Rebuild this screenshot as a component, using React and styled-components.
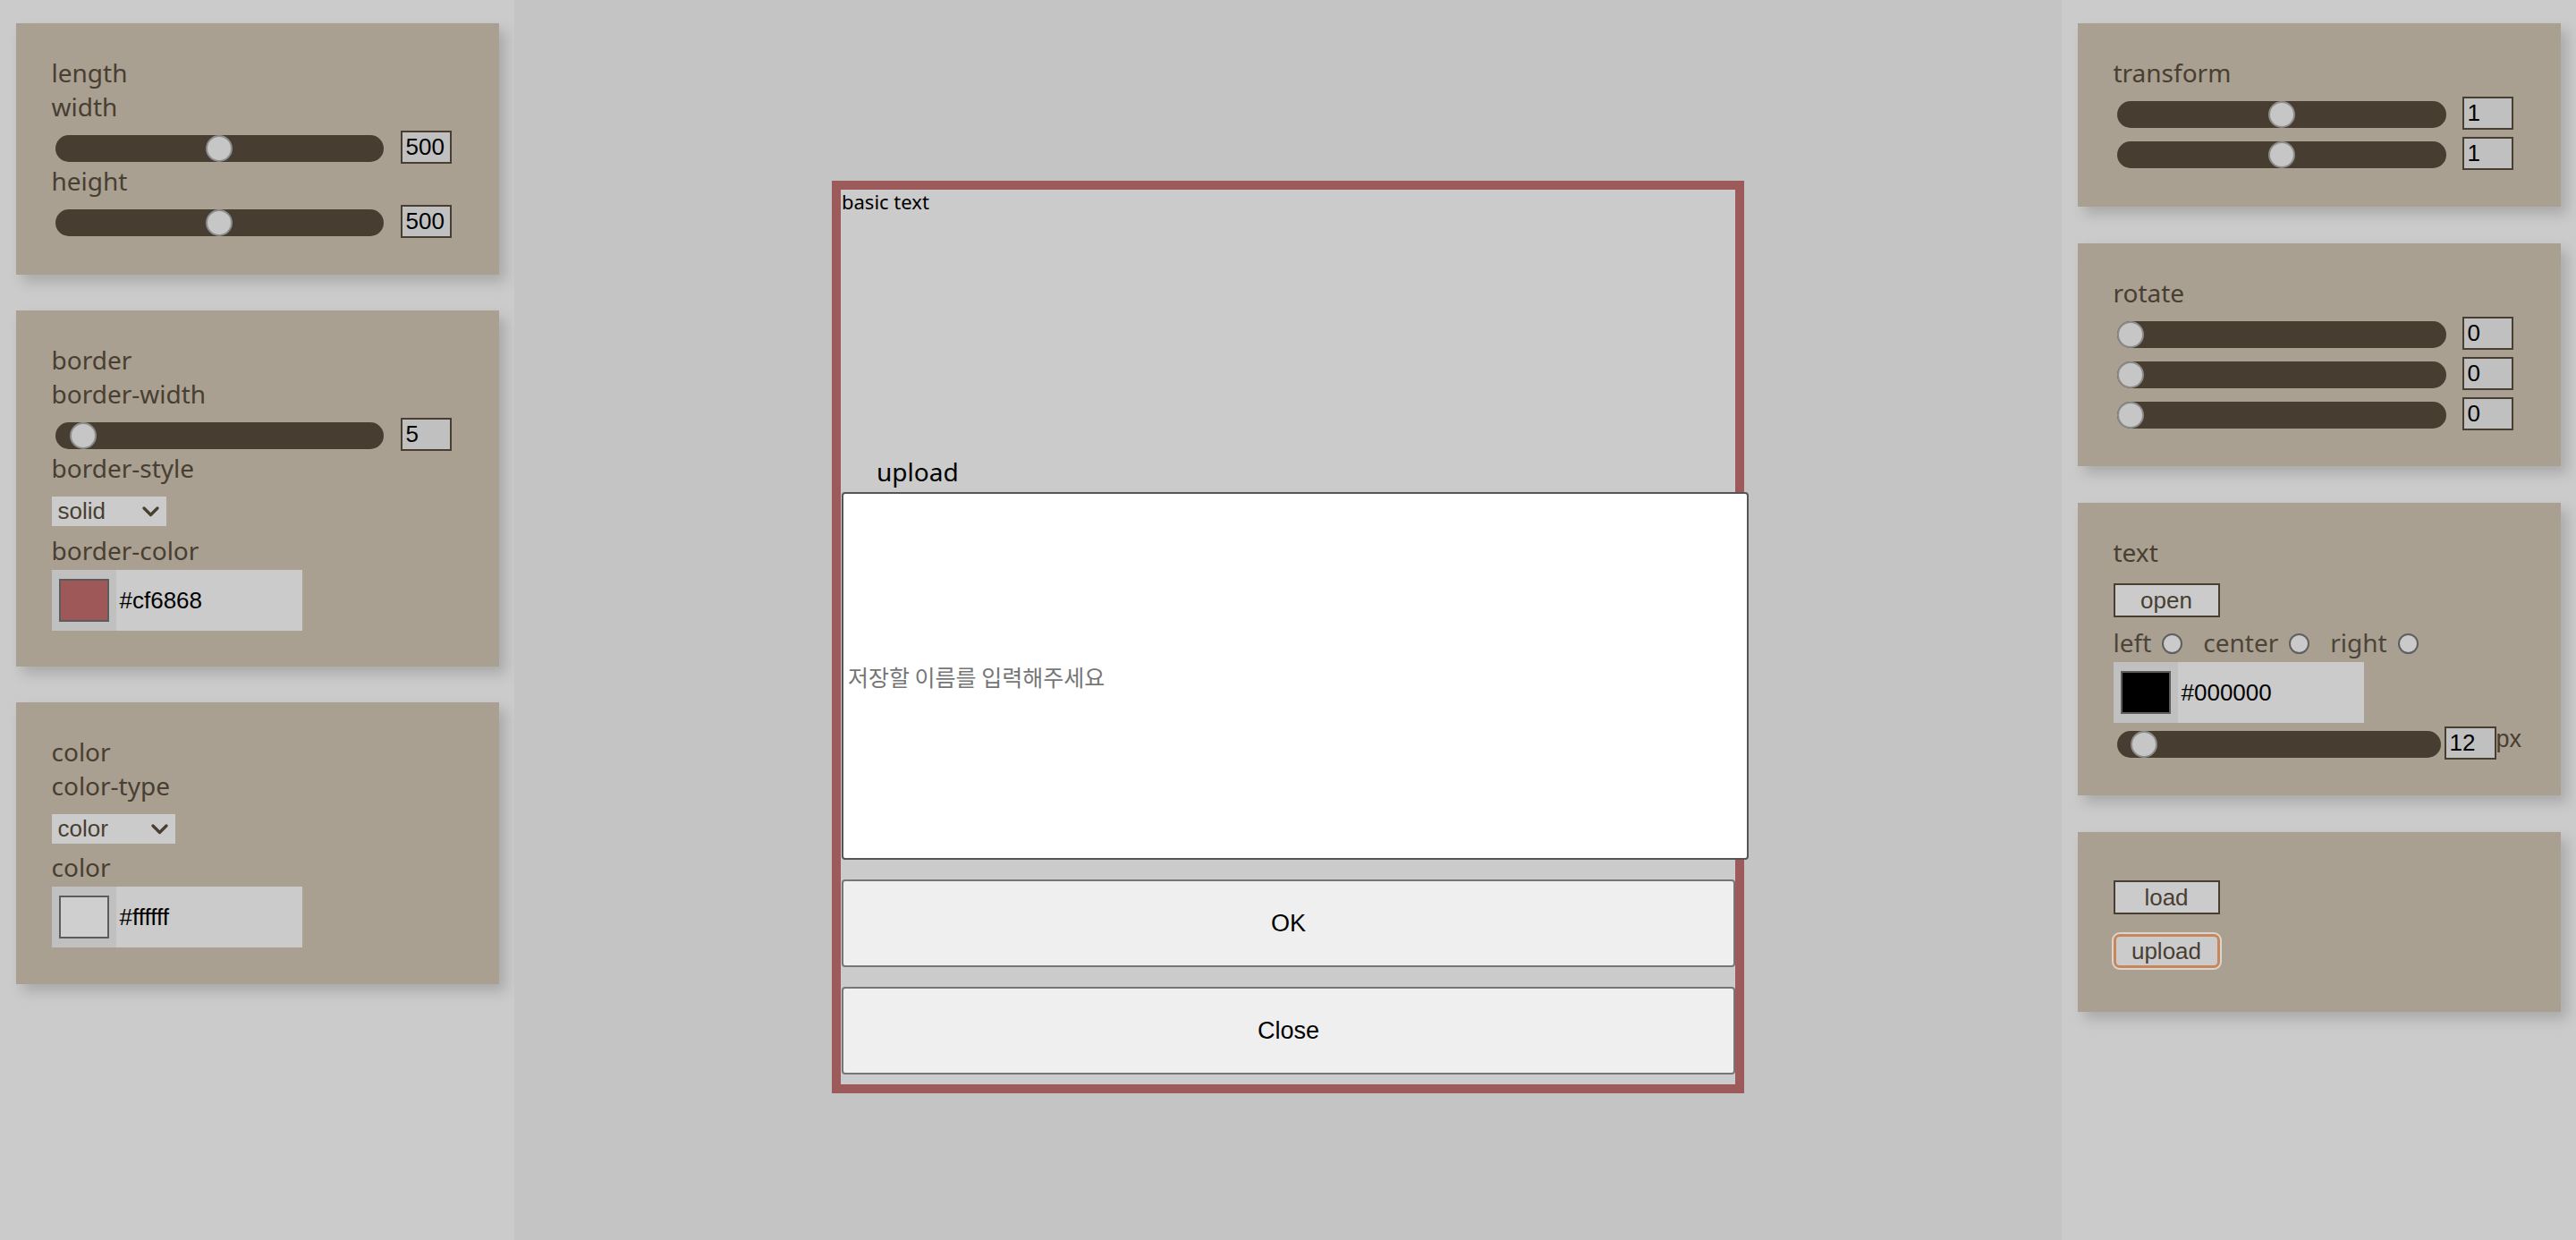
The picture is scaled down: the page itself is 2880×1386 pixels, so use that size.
import React from "react";
import styled, { createGlobalStyle } from "styled-components";

const Global = createGlobalStyle`
  html, body { margin: 0; padding: 0; background: #c4c4c4; }
  * { box-sizing: border-box; }
`;

const INK = "#483e32";

const Layout = styled.div`
  display: grid;
  grid-template-columns: 575px 1fr 575px;
  min-height: 100vh;
  font-family: "Noto Sans", "Noto Sans CJK KR", sans-serif;
`;

const Sidebar = styled.aside`
  background: #cbcbcb;
  display: flex;
  flex-direction: column;
  align-items: center;
  gap: ${(p) => p.$gap || 40}px;
  padding-top: 26px;
`;

const Panel = styled.section`
  width: 540px;
  background: #a9a091;
  box-shadow: 7px 8px 14px rgba(0, 0, 0, 0.17);
  padding: ${(p) => p.$pad || "36px 40px 41px"};
  display: flex;
  flex-direction: column;
  align-items: flex-start;
`;

const Label = styled.div`
  font-size: 28px;
  line-height: 38px;
  color: ${INK};
  margin-top: ${(p) => p.$mt || 0}px;
`;

const SliderRow = styled.div`
  display: flex;
  align-items: center;
  gap: ${(p) => p.$gap ?? 19}px;
  margin-top: ${(p) => p.$mt ?? 8}px;
  height: 37px;
`;

const Range = styled.input.attrs({ type: "range" })`
  -webkit-appearance: none;
  appearance: none;
  width: ${(p) => p.$w || 367}px;
  height: 30px;
  margin: 3px 0 0 4px;
  padding: 0;
  background: #473d31;
  border-radius: 15px;
  outline: none;
  &::-webkit-slider-thumb {
    -webkit-appearance: none;
    appearance: none;
    width: 30px;
    height: 30px;
    border-radius: 50%;
    background: #c6c6c6;
    border: 2px solid #8c8c8c;
    box-sizing: border-box;
  }
`;

const NumberBox = styled.input`
  width: ${(p) => p.$w || 57}px;
  height: 37px;
  border: 2px solid ${INK};
  background: #c0c0c0;
  color: #000;
  font-family: "Liberation Sans", Arial, sans-serif;
  font-size: 26px;
  padding: 0 4px;
  margin: 0;
  outline: none;
  border-radius: 0;
`;

const Unit = styled.span`
  font-family: "Liberation Sans", Arial, sans-serif;
  font-size: 27px;
  color: ${INK};
  align-self: flex-start;
  line-height: 28px;
  margin-left: -4px;
`;

const SelectBox = styled.div`
  display: flex;
  align-items: center;
  justify-content: space-between;
  width: ${(p) => p.$w}px;
  height: 33px;
  margin-top: 13px;
  padding: 0 8px 0 7px;
  background: #cbcbcb;
  font-family: "Liberation Sans", Arial, sans-serif;
  font-size: 26px;
  color: ${INK};
`;

const ColorField = styled.div`
  display: flex;
  width: 280px;
  height: 68px;
  margin-top: ${(p) => p.$mt ?? 3}px;
  background: #cbcbcb;
`;

const SwatchWell = styled.div`
  width: 72px;
  background: #c0c0c0;
  display: flex;
  align-items: center;
  justify-content: center;
`;

const Swatch = styled.div`
  width: 56px;
  height: 48px;
  border: 2px solid #5c5c5c;
  background: ${(p) => p.$c};
`;

const ColorValue = styled.span`
  align-self: center;
  margin-left: 4px;
  font-family: "Liberation Sans", Arial, sans-serif;
  font-size: 26px;
  color: #000;
`;

const Btn = styled.button`
  width: 119px;
  height: 38px;
  margin: ${(p) => p.$m || 0};
  border: 2px solid ${INK};
  background: #cbcbcb;
  color: ${INK};
  font-family: "Liberation Sans", Arial, sans-serif;
  font-size: 26px;
  padding: 0;
  border-radius: 0;
  cursor: pointer;
  ${(p) =>
    p.$focused &&
    `
    border: 3px solid #c6875d;
    border-radius: 7px;
    box-shadow: 0 0 0 2px #ddd5cc;
  `}
`;

const RadioRow = styled.div`
  display: flex;
  align-items: center;
  height: 38px;
  margin-top: 9px;
`;

const RadioLabel = styled.label`
  display: flex;
  align-items: center;
  font-size: 28px;
  line-height: 38px;
  color: #4d4439;
  margin-right: 23px;
`;

const RadioDot = styled.span`
  display: inline-block;
  width: 23px;
  height: 23px;
  margin-left: 12px;
  margin-top: 2px;
  border-radius: 50%;
  border: 2px solid #5f5f5f;
  background: #cacaca;
`;

const Main = styled.main`
  background: #c4c4c4;
  display: flex;
  justify-content: center;
  align-items: flex-start;
  padding-top: 202px;
`;

const Canvas = styled.div`
  width: 1020px;
  height: 1020px;
  border: 10px solid #9d5a5a;
  background: #cbcbcb;
  display: flex;
  flex-direction: column;
`;

const BasicText = styled.div`
  font-size: 22px;
  line-height: 1.2;
  color: #000;
  padding-left: 1px;
`;

const Dialog = styled.div`
  margin-top: auto;
  display: flex;
  flex-direction: column;
  padding-bottom: 11px;
`;

const DialogTitle = styled.div`
  font-size: 28px;
  line-height: 38px;
  color: #000;
  padding-left: 40px;
`;

const NameInput = styled.input`
  width: 1014px;
  height: 411px;
  margin: 4px 0 0 1px;
  border: 2px solid #555;
  border-radius: 4px;
  background: #fff;
  padding: 0 5px;
  font-family: "Noto Sans CJK KR", "Noto Sans", sans-serif;
  font-size: 25px;
  outline: none;
  &::placeholder { color: #767676; }
`;

const DialogButton = styled.button`
  width: 999px;
  height: 98px;
  margin: 22px 0 0 1px;
  border: 2px solid #767676;
  border-radius: 4px;
  background: #efefef;
  color: #000;
  font-family: "Liberation Sans", Arial, sans-serif;
  font-size: 27px;
  cursor: pointer;
`;

const Chevron = () => (
  <svg width="19" height="12" viewBox="0 0 19 12">
    <polyline points="2,2 9.5,9.5 17,2" fill="none" stroke={INK} strokeWidth="3.2" strokeLinecap="round" strokeLinejoin="round" />
  </svg>
);

const Slider = ({ min, max, step, value, w, gap, mt, boxW, unit }) => (
  <SliderRow $gap={gap} $mt={mt}>
    <Range $w={w} min={min} max={max} step={step} defaultValue={value} />
    <NumberBox $w={boxW} defaultValue={value} />
    {unit && <Unit>{unit}</Unit>}
  </SliderRow>
);

const Color = ({ c, value, mt }) => (
  <ColorField $mt={mt}>
    <SwatchWell>
      <Swatch $c={c} />
    </SwatchWell>
    <ColorValue>{value}</ColorValue>
  </ColorField>
);

export default function App() {
  return (
    <>
      <Global />
      <Layout>
        <Sidebar>
          <Panel>
            <Label>length</Label>
            <Label>width</Label>
            <Slider min={0} max={1000} value={500} />
            <Label>height</Label>
            <Slider min={0} max={1000} value={500} />
          </Panel>
          <Panel $pad="36px 40px 40px">
            <Label>border</Label>
            <Label>border-width</Label>
            <Slider min={0} max={100} value={5} />
            <Label>border-style</Label>
            <SelectBox $w={128}>
              <span>solid</span>
              <Chevron />
            </SelectBox>
            <Label $mt={8}>border-color</Label>
            <Color c="#9e5858" value="#cf6868" />
          </Panel>
          <Panel $pad="36px 40px 41px">
            <Label>color</Label>
            <Label>color-type</Label>
            <SelectBox $w={138}>
              <span>color</span>
              <Chevron />
            </SelectBox>
            <Label $mt={7}>color</Label>
            <Color c="#cfcfcf" value="#ffffff" />
          </Panel>
        </Sidebar>

        <Main>
          <Canvas>
            <BasicText>basic text</BasicText>
            <Dialog>
              <DialogTitle>upload</DialogTitle>
              <NameInput placeholder="저장할 이름를 입력해주세요" />
              <DialogButton>OK</DialogButton>
              <DialogButton>Close</DialogButton>
            </Dialog>
          </Canvas>
        </Main>

        <Sidebar $gap={41}>
          <Panel>
            <Label>transform</Label>
            <Slider min={0} max={2} step={0.1} value={1} w={368} gap={18} />
            <Slider min={0} max={2} step={0.1} value={1} w={368} gap={18} />
          </Panel>
          <Panel $pad="36px 40px 40px">
            <Label>rotate</Label>
            <Slider min={0} max={360} value={0} w={368} gap={18} />
            <Slider min={0} max={360} value={0} w={368} gap={18} />
            <Slider min={0} max={360} value={0} w={368} gap={18} />
          </Panel>
          <Panel $pad="36px 40px 40px">
            <Label>text</Label>
            <Btn $m="16px 0 0 0">open</Btn>
            <RadioRow>
              <RadioLabel>left<RadioDot /></RadioLabel>
              <RadioLabel>center<RadioDot /></RadioLabel>
              <RadioLabel>right<RadioDot /></RadioLabel>
            </RadioRow>
            <Color c="#000" value="#000000" mt={3} />
            <Slider min={0} max={250} value={12} w={362} gap={4} mt={4} boxW={58} unit="px" />
          </Panel>
          <Panel $pad="54px 40px 49px">
            <Btn>load</Btn>
            <Btn $m="22px 0 0 0" $focused>upload</Btn>
          </Panel>
        </Sidebar>
      </Layout>
    </>
  );
}
